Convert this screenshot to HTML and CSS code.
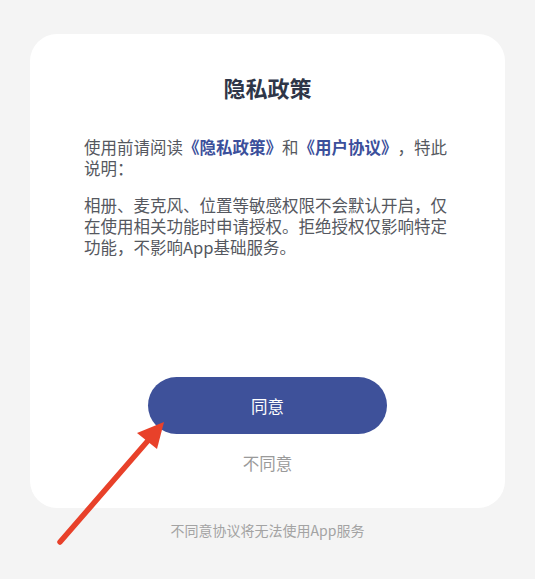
FILE: index.html
```html
<!DOCTYPE html>
<html lang="zh-CN">
<head>
<meta charset="utf-8">
<title>隐私政策</title>
<link rel="stylesheet" href="styles.css">
</head>
<body>
<div class="page">
  <div class="card">
    <h1 class="title">隐私政策</h1>
    <p class="text">使用前请阅读<a class="link">《隐私政策》</a>和<a class="link">《用户协议》</a>，特此说明：</p>
    <p class="text text-second">相册、麦克风、位置等敏感权限不会默认开启，仅在使用相关功能时申请授权。拒绝授权仅影响特定功能，不影响App基础服务。</p>
    <div class="actions">
      <button class="btn-agree">同意</button>
      <div class="btn-disagree">不同意</div>
    </div>
  </div>
  <div class="footer">不同意协议将无法使用App服务</div>
  <svg class="arrow" width="535" height="579" viewBox="0 0 535 579">
    <line x1="60" y1="542" x2="152" y2="436" stroke="#e8412a" stroke-width="5.5" stroke-linecap="round"/>
    <polygon points="164,422 137,433 157,449" fill="#e8412a"/>
  </svg>
</div>
</body>
</html>
```
FILE: styles.css
```css
html, body {
  margin: 0;
  padding: 0;
  background: #f4f4f4;
}
body {
  font-family: "Noto Sans CJK SC", "Noto Sans", sans-serif;
  text-spacing-trim: space-all;
}
.page {
  position: relative;
  width: 535px;
  height: 579px;
  box-sizing: border-box;
  padding: 34px 30px 0;
}
.card {
  background: #ffffff;
  border-radius: 27px;
  height: 474px;
  box-sizing: border-box;
  padding: 38px 54px 33px;
  display: flex;
  flex-direction: column;
}
.title {
  margin: 0;
  font-size: 22px;
  line-height: 30px;
  font-weight: 700;
  color: #2f3648;
  text-align: center;
}
.text {
  margin: 35px 0 0;
  font-size: 16.5px;
  line-height: 21px;
  color: #555860;
}
.text-second {
  margin-top: 16px;
}
.link {
  color: #3b4f9b;
  font-weight: 700;
}
.actions {
  margin-top: auto;
  display: flex;
  flex-direction: column;
  align-items: center;
}
.btn-agree {
  width: 239px;
  height: 57px;
  border: none;
  border-radius: 29px;
  background: #3e519a;
  color: #ffffff;
  font-family: "Noto Sans CJK SC", "Noto Sans", sans-serif;
  font-size: 16.5px;
  padding: 0;
}
.btn-disagree {
  margin-top: 17px;
  font-size: 16.5px;
  line-height: 24px;
  color: #9a9a9a;
}
.footer {
  margin-top: 12px;
  text-align: center;
  font-size: 14px;
  line-height: 20px;
  color: #a3a3a3;
}
.arrow {
  position: absolute;
  left: 0;
  top: 0;
  pointer-events: none;
}
```
